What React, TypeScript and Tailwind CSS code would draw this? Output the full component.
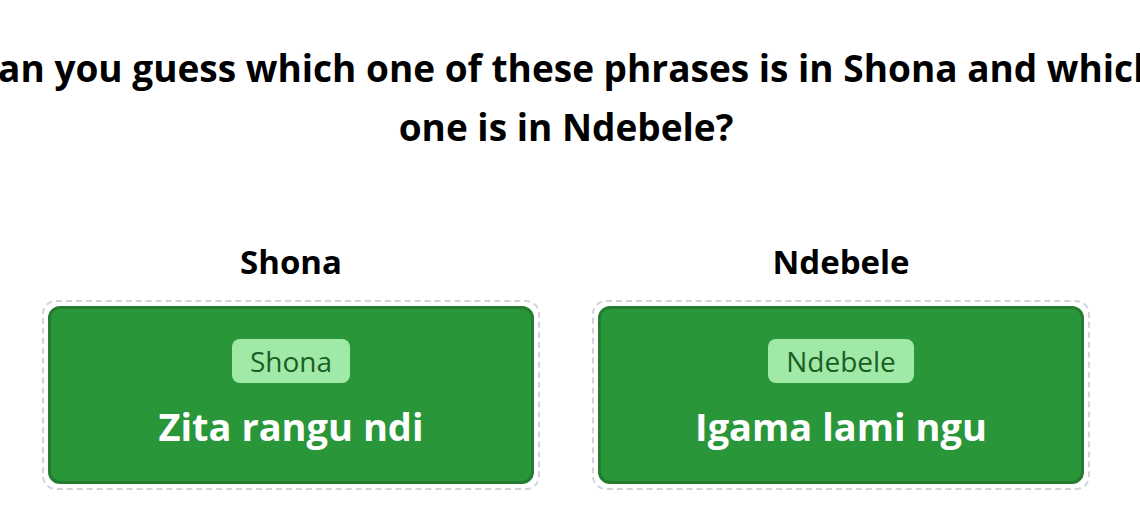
const cards = [
  { lang: 'Shona', phrase: 'Zita rangu ndi' },
  { lang: 'Ndebele', phrase: 'Igama lami ngu' },
];

function PhraseCard({ lang, phrase }: { lang: string; phrase: string }) {
  return (
    <div className="flex flex-col items-center">
      <h2 className="text-[33px] font-bold text-black mb-[18px] leading-[40px]">{lang}</h2>
      <div className="w-[498px] h-[190px] p-[4px] border-2 border-dashed border-[#d1d5db] rounded-[14px]">
        <div className="h-full w-full flex flex-col items-center justify-center bg-[#299639] border-[3px] border-[#237c30] rounded-[12px] pb-[2px]">
          <span className="px-[18px] h-[44px] flex items-center rounded-[8px] bg-[#a0e9a6] text-[#1b5e25] text-[28px] leading-none">
            {lang}
          </span>
          <p className="mt-[19px] text-white font-bold text-[38px] leading-[48px]">{phrase}</p>
        </div>
      </div>
    </div>
  );
}

export default function App() {
  return (
    <div className="w-[1140px] h-[527px] overflow-hidden bg-white" style={{ fontFamily: '"Open Sans", "Noto Sans", sans-serif' }}>
      <div className="w-[1132px] flex flex-col items-center pt-[38px]">
        <h1 className="w-[1190px] shrink-0 text-center text-[37px] font-bold text-black leading-[59px]">
          Can you guess which one of these phrases is in Shona and which one is in Ndebele?
        </h1>
        <div className="mt-[86px] flex gap-[52px]">
          {cards.map((c) => (
            <PhraseCard key={c.lang} lang={c.lang} phrase={c.phrase} />
          ))}
        </div>
      </div>
    </div>
  );
}
